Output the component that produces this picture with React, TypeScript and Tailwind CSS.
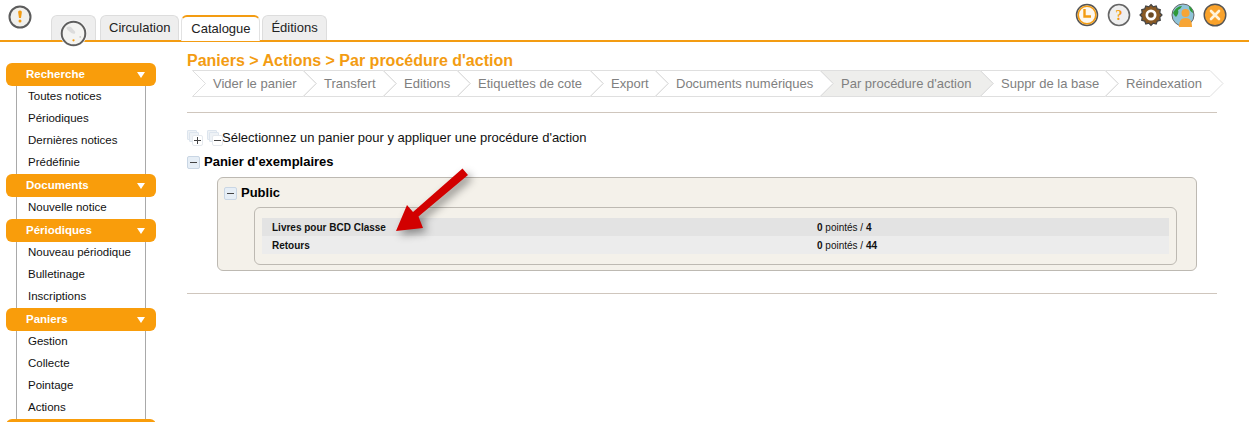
const font = "font-['Liberation_Sans',Arial,sans-serif]";

const sections = [
  { title: "Recherche", items: ["Toutes notices", "Périodiques", "Dernières notices", "Prédéfinie"] },
  { title: "Documents", items: ["Nouvelle notice"] },
  { title: "Périodiques", items: ["Nouveau périodique", "Bulletinage", "Inscriptions"] },
  { title: "Paniers", items: ["Gestion", "Collecte", "Pointage", "Actions"] },
  { title: "Etats", items: [] },
];

const steps = [
  { label: "Vider le panier", width: 111 },
  { label: "Transfert", width: 80 },
  { label: "Editions", width: 74 },
  { label: "Etiquettes de cote", width: 133 },
  { label: "Export", width: 65 },
  { label: "Documents numériques", width: 165 },
  { label: "Par procédure d'action", width: 160, active: true },
  { label: "Suppr de la base", width: 125 },
  { label: "Réindexation", width: 105 },
];

function Step({ label, width, active }: { label: string; width: number; active?: boolean }) {
  return (
    <div className="relative h-[27px] shrink-0" style={{ width }}>
      <svg className="absolute left-0 top-0" width={width + 14} height={27}>
        <path
          d={`M0.5 0.5H${width}L${width + 13} 13.5L${width} 26.5H0.5L13.5 13.5Z`}
          fill={active ? "#eeeeec" : "none"}
          stroke="#dfdfdf"
        />
      </svg>
      <span className="absolute left-[21px] top-[5px] whitespace-nowrap text-[13px] leading-[17px] text-[#808080]">
        {label}
      </span>
    </div>
  );
}

function Ring({ children, className }: { children: React.ReactNode; className?: string }) {
  return (
    <svg viewBox="0 0 24 24" className={className ?? "h-6 w-6"}>
      {children}
    </svg>
  );
}

function Tab({ label, active }: { label: string; active?: boolean }) {
  if (active) {
    return (
      <div className="z-10 -mb-px flex h-[26px] w-[79px] items-center justify-center rounded-t-[6px] border-t-2 border-x border-x-[#e2e2e2] border-t-[#f39c12] bg-white text-[13px] text-[#222]">
        {label}
      </div>
    );
  }
  return (
    <div className="flex h-[25px] items-center justify-center rounded-t-[6px] border border-b-0 border-[#dddddd] bg-[#eeeeee] px-2 text-[13px] text-[#222]">
      {label}
    </div>
  );
}

function Expander({ sign = "minus", className }: { sign?: "minus" | "plus"; className?: string }) {
  return (
    <span className={`flex h-[13px] w-[13px] items-center justify-center rounded-[2px] border border-[#c9d6e4] bg-[#e6eef6] ${className ?? ""}`}>
      <span className="relative block h-px w-[7px] bg-[#444]">
        {sign === "plus" && <span className="absolute left-[3px] top-[-3px] block h-[7px] w-px bg-[#444]" />}
      </span>
    </span>
  );
}

function StackIcon({ sign }: { sign: "minus" | "plus" }) {
  return (
    <span className="relative block h-[16px] w-[16px]">
      <span className="absolute left-0 top-0 h-[10px] w-[10px] rounded-[1px] border border-[#dde5ee] bg-[#eef2f6]" />
      <span className="absolute left-[2px] top-[2px] h-[10px] w-[10px] rounded-[1px] border border-[#dde5ee] bg-[#eef2f6]" />
      <Expander sign={sign} className="absolute left-[5px] top-[5px] !h-[11px] !w-[11px] !border-[#e5e9ee] !bg-white" />
    </span>
  );
}

function BasketRow({ name, count, total, shade }: { name: string; count: number; total: number; shade: string }) {
  return (
    <div className={`flex h-[18px] items-center text-[10px] text-[#111] ${shade}`}>
      <span className="ml-[10px] w-[545px] font-bold">{name}</span>
      <span>
        <b>{count}</b> pointés / <b>{total}</b>
      </span>
    </div>
  );
}

export default function App() {
  return (
    <div className={`relative h-[422px] w-[1249px] overflow-hidden bg-white ${font}`}>
      <header className="relative h-[42px] border-b-2 border-[#f39c12]">
        <div className="absolute left-[8px] top-[5px]">
          <Ring className="h-[24px] w-[24px]">
            <circle cx="12" cy="12" r="10.5" fill="#f1f0ec" stroke="#5c5c5c" strokeWidth="2" />
            <path d="M12 5.5c1.6 0 2 1 1.8 2.2L13 13h-2l-.8-5.3C10 6.500 10.400 5.500 12 5.500Z" fill="#f39c12" />
            <circle cx="12" cy="16" r="1.500" fill="#f39c12" />
          </Ring>
        </div>
        <div className="absolute bottom-0 left-[51px] flex items-end gap-[2px]">
          <div className="mr-[2px] h-[25px] w-[45px] rounded-t-[6px] border border-b-0 border-[#dddddd] bg-[#eeeeee]" />
          <Tab label="Circulation" />
          <Tab label="Catalogue" active />
          <Tab label="Éditions" />
        </div>
        <div className="absolute left-[60px] top-[20px] z-20 rounded-full bg-white">
          <Ring className="h-[27px] w-[27px]">
            <circle cx="12" cy="12" r="10.500" fill="#f4f4f2" stroke="#5f5f5f" strokeWidth="1.800" />
            <path d="M6 6.500c2-1.500 4-.5 5 1s3 2.500 2.500 4-3 .5-4.500-.8S5 8 6 6.500Z" fill="#dcdcdc" />
            <circle cx="12" cy="18" r="1" fill="#f39c12" />
            <circle cx="18" cy="15" r=".8" fill="#c9c9c9" />
          </Ring>
        </div>
        <div className="absolute right-[22px] top-[3px] flex items-center gap-[8px]">
          <Ring>
            <circle cx="12" cy="12" r="10.500" fill="#fbe9cd" stroke="#555" strokeWidth="1.500" />
            <circle cx="12" cy="12" r="8.800" fill="#fdf8ef" stroke="#f39c12" strokeWidth="1.600" />
            <path d="M9.500 6v7.500H16" fill="none" stroke="#f39c12" strokeWidth="2.400" />
          </Ring>
          <Ring>
            <circle cx="12" cy="12" r="10.500" fill="#efefef" stroke="#666" strokeWidth="1.600" />
            <text x="12" y="17" textAnchor="middle" fontSize="14" fontWeight="700" fill="#f39c12" fontFamily="Liberation Serif, serif">?</text>
          </Ring>
          <Ring>
            <path d="M12 1.500l2.200 2.300 3-.8 1.100 2.900 3 .7-.5 3.100 2.200 2.300-2.200 2.300.5 3.100-3 .7-1.100 2.900-3-.8L12 22.500l-2.200-2.300-3 .8-1.100-2.900-3-.7.5-3.100L1 12l2.200-2.300-.5-3.100 3-.7 1.100-2.900 3 .8Z" fill="#8a5a24" stroke="#444" strokeWidth="1.200" />
            <circle cx="12" cy="12" r="5.500" fill="#fff" />
            <circle cx="12" cy="12" r="2.800" fill="#6b4a24" />
          </Ring>
          <Ring>
            <circle cx="12" cy="12" r="11" fill="#8fc3d8" stroke="#666" strokeWidth="1" />
            <path d="M2 10c2-4 5-7 9-7-1 2-2 3-4 4 1 2 0 5-2 7-1-1-2-2-3-4ZM18 3c2 1 4 4 4 7-2-1-4-3-4-7Z" fill="#2f9a3a" />
            <circle cx="14.500" cy="10" r="4" fill="#f7a535" />
            <path d="M8 24c0-6 2-9 6.500-9s6.500 3 6.500 9Z" fill="#f7a535" />
          </Ring>
          <Ring>
            <circle cx="12" cy="12" r="10.800" fill="#f9a22b" stroke="#555" strokeWidth="1.400" />
            <path d="M8 8l8 8M16 8l-8 8" stroke="#fff3dc" strokeWidth="2.600" strokeLinecap="round" />
          </Ring>
        </div>
      </header>

      <div className="flex">
        <aside className="ml-[6px] mt-[21px] w-[150px] shrink-0">
          {sections.map((section) => (
            <div key={section.title}>
              <div className="flex h-[23px] items-center justify-between rounded-[6px] bg-[#f99d0b] pl-[20px] pr-[11px] text-[11.500px] font-bold text-white">
                <span>{section.title}</span>
                <span className="h-0 w-0 border-x-[4px] border-t-[6px] border-x-transparent border-t-white" />
              </div>
              {section.items.length > 0 && (
                <ul className="mx-[10px] border-x border-[#a9a9a9] pl-[11px]">
                  {section.items.map((item) => (
                    <li key={item} className="flex h-[22px] items-center text-[11.500px] text-[#111]">
                      {item}
                    </li>
                  ))}
                </ul>
              )}
            </div>
          ))}
        </aside>

        <main className="ml-[31px] w-[1030px] shrink-0">
          <h1 className="mt-[9px] h-[19px] text-[16px] font-bold leading-[19px] text-[#f39c12]">
            Paniers &gt; Actions &gt; Par procédure d'action
          </h1>
          <div className="ml-[5px] flex">
            {steps.map((step) => (
              <Step key={step.label} {...step} />
            ))}
          </div>
          <hr className="mt-[15px] border-0 border-t border-[#cfc6bd]" />
          <div className="mt-[16px] flex h-[18px] items-center text-[13px] text-[#111]">
            <StackIcon sign="plus" />
            <span className="ml-[4px]"><StackIcon sign="minus" /></span>
            <span className="-ml-[1px]">Sélectionnez un panier pour y appliquer une procédure d'action</span>
          </div>
          <div className="mt-[6px] flex h-[18px] items-center text-[13px] font-bold text-black">
            <Expander />
            <span className="ml-[4px]">Panier d'exemplaires</span>
          </div>
          <div className="ml-[30px] mt-[6px] h-[94px] w-[980px] rounded-[6px] border border-[#bdb9b2] bg-[#f4f1ea] pl-[6px] pt-[6px]">
            <div className="flex h-[18px] items-center text-[13px] font-bold text-black">
              <Expander />
              <span className="ml-[4px]">Public</span>
            </div>
            <div className="ml-[30px] mt-[5px] w-[923px] rounded-[6px] border border-[#bdb9b2] bg-[#f4f1ea] px-[7px] pb-[10px] pt-[10px]">
              <BasketRow name="Livres pour BCD Classe" count={0} total={4} shade="bg-[#e3e3e3]" />
              <BasketRow name="Retours" count={0} total={44} shade="bg-[#ececec]" />
            </div>
          </div>
          <hr className="mt-[22px] border-0 border-t border-[#cfc6bd]" />
        </main>
      </div>

      <svg className="absolute left-[390px] top-[160px] drop-shadow-[4px_4px_4px_rgba(0,0,0,0.4)]" width="85" height="75">
        <path d="M72.500 8.500L78 15 28.500 56.500 33 68 6 71 17 45l6 7Z" fill="#d20000" />
      </svg>
    </div>
  );
}
